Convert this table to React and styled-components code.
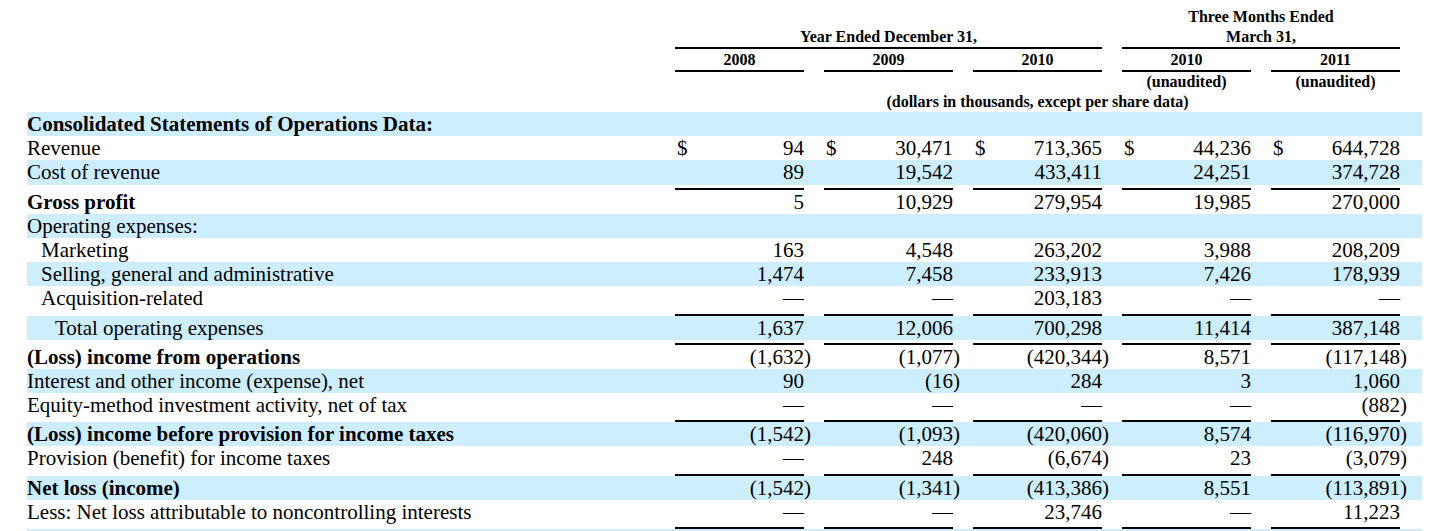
import React from 'react';
import styled, { createGlobalStyle } from 'styled-components';

const GlobalStyle = createGlobalStyle`
  html, body {
    margin: 0;
    padding: 0;
    background: #fff;
  }
  body {
    font-family: "Liberation Serif", "Times New Roman", serif;
    color: #000;
  }
`;

const COLS = '648px repeat(5, 129px 20px)';

const rows = [
    { label: 'Consolidated Statements of Operations Data:', bold: true },
    { label: 'Revenue', dollar: true, values: ['94', '30,471', '713,365', '44,236', '644,728'] },
    { label: 'Cost of revenue', values: ['89', '19,542', '433,411', '24,251', '374,728'], rule: true },
    { label: 'Gross profit', bold: true, values: ['5', '10,929', '279,954', '19,985', '270,000'] },
    { label: 'Operating expenses:' },
    { label: 'Marketing', indent: 1, values: ['163', '4,548', '263,202', '3,988', '208,209'] },
    { label: 'Selling, general and administrative', indent: 1, values: ['1,474', '7,458', '233,913', '7,426', '178,939'] },
    { label: 'Acquisition-related', indent: 1, values: ['—', '—', '203,183', '—', '—'], rule: true },
    { label: 'Total operating expenses', indent: 2, values: ['1,637', '12,006', '700,298', '11,414', '387,148'], rule: true },
    { label: '(Loss) income from operations', bold: true, values: ['(1,632)', '(1,077)', '(420,344)', '8,571', '(117,148)'] },
    { label: 'Interest and other income (expense), net', values: ['90', '(16)', '284', '3', '1,060'] },
    { label: 'Equity-method investment activity, net of tax', values: ['—', '—', '—', '—', '(882)'], rule: true },
    { label: '(Loss) income before provision for income taxes', bold: true, values: ['(1,542)', '(1,093)', '(420,060)', '8,574', '(116,970)'] },
    { label: 'Provision (benefit) for income taxes', values: ['—', '248', '(6,674)', '23', '(3,079)'], rule: true },
    { label: 'Net loss (income)', bold: true, values: ['(1,542)', '(1,341)', '(413,386)', '8,551', '(113,891)'] },
    { label: 'Less: Net loss attributable to noncontrolling interests', values: ['—', '—', '23,746', '—', '11,223'], rule: true },
    { label: '' },
];

function App() {
    return (
        <Page>
            <GlobalStyle />
            <Head>
                <HeadCell $col="8 / span 3" $row={1}>Three Months Ended</HeadCell>
                <HeadCell $col="2 / span 5" $row={2} $rule>Year Ended December 31,</HeadCell>
                <HeadCell $col="8 / span 3" $row={2} $rule>March 31,</HeadCell>
                {['2008', '2009', '2010', '2010', '2011'].map((year, i) => (
                    <YearCell key={i} $col={2 + i * 2}>{year}</YearCell>
                ))}
                <HeadCell $col={8} $row={4}>(unaudited)</HeadCell>
                <HeadCell $col={10} $row={4}>(unaudited)</HeadCell>
                <HeadCell $col="2 / span 9" $row={5}>(dollars in thousands, except per share data)</HeadCell>
            </Head>

            {rows.map((row, i) => (
                <React.Fragment key={i}>
                    <Row $striped={i % 2 === 0}>
                        <Label $indent={row.indent || 0} $bold={row.bold}>{row.label}</Label>
                        {row.values && row.values.map((v, j) => {
                            const neg = v.endsWith(')');
                            return (
                                <React.Fragment key={j}>
                                    <Amount>
                                        <span>{row.dollar ? '$' : ''}</span>
                                        <span>{neg ? v.slice(0, -1) : v}</span>
                                    </Amount>
                                    <Paren>{neg ? ')' : ''}</Paren>
                                </React.Fragment>
                            )
                        })}
                    </Row>
                    {row.rule && (
                        <RuleRow>
                            <div />
                            {[0, 1, 2, 3, 4].map(k => (
                                <React.Fragment key={k}>
                                    <Rule />
                                    <div />
                                </React.Fragment>
                            ))}
                        </RuleRow>
                    )}
                </React.Fragment>
            ))}
        </Page>
    )
}

const Page = styled.div`
    padding: 7px 0 0 27px;
    width: 1395px;
`

const Head = styled.div`
    display: grid;
    grid-template-columns: ${COLS};
    grid-template-rows: 20px 22px 23px 20px 20px;
    font-size: 16px;
    font-weight: bold;
    line-height: 20px;
    text-align: center;
`

const HeadCell = styled.div`
    grid-column: ${p => p.$col};
    grid-row: ${p => p.$row};
    border-bottom: ${p => p.$rule ? '2px solid #000' : 'none'};
    white-space: nowrap;
`

const YearCell = styled.div`
    grid-column: ${p => p.$col};
    grid-row: 3;
    padding-top: 1px;
    border-bottom: 2px solid #000;
`

const Row = styled.div`
    display: grid;
    grid-template-columns: ${COLS};
    height: 24.2px;
    line-height: 24.2px;
    font-size: 21px;
    background: ${p => p.$striped ? '#cceeff' : 'transparent'};
    white-space: nowrap;
`

const Label = styled.div`
    padding-left: ${p => p.$indent * 14}px;
    font-weight: ${p => p.$bold ? 'bold' : 'normal'};
`

const Amount = styled.div`
    display: flex;
    justify-content: space-between;
    padding-left: 2px;
`

const Paren = styled.div`
    text-align: left;
`

const RuleRow = styled.div`
    display: grid;
    grid-template-columns: ${COLS};
    height: 5px;
`

const Rule = styled.div`
    align-self: end;
    border-bottom: 2px solid #000;
`

export default App;
